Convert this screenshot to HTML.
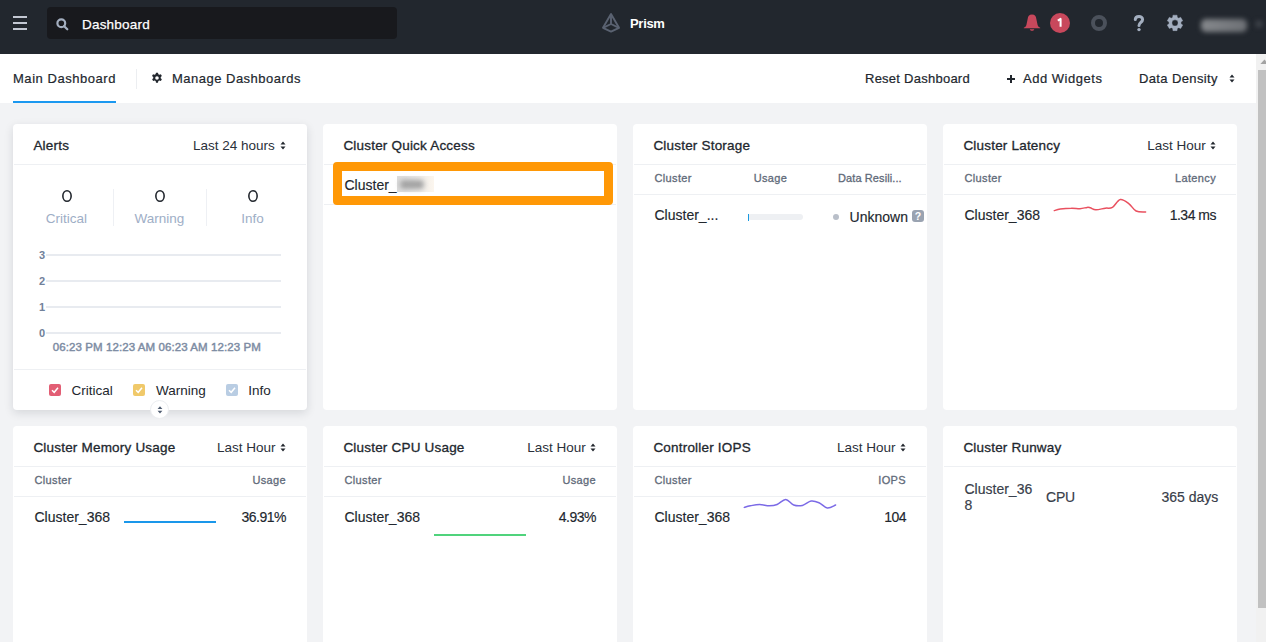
<!DOCTYPE html>
<html><head><meta charset="utf-8">
<style>
*{box-sizing:border-box;margin:0;padding:0}
html,body{width:1266px;height:642px;overflow:hidden;background:#f2f3f5;font-family:"Liberation Sans",sans-serif;color:#22272e}
.a{position:absolute}
.t{position:absolute;white-space:nowrap;line-height:1}
#hdr{left:0;top:0;width:1266px;height:54px;background:#22272e}
#tabs{left:0;top:54px;width:1256px;height:49px;background:#fff}
.card{position:absolute;background:#fff;border-radius:4px;width:294px}
.sep{position:absolute;left:1px;right:1px;height:1px;background:#eef0f3}
.ttl{font-size:13.5px;letter-spacing:0.2px;-webkit-text-stroke:0.3px #22272e;color:#22272e}
.sel{font-size:13.5px;letter-spacing:0;color:#2a303a}
.colh{font-size:11px;letter-spacing:0.35px;color:#5f6a79;-webkit-text-stroke:0.3px #5f6a79}

.val{font-size:14px;color:#22272e;-webkit-text-stroke:0.15px #22272e}
.num{letter-spacing:-0.5px}
#sb{left:1256px;top:54px;width:10px;height:588px;background:#f1f1f1}
#thumb{left:1258px;top:70px;width:8px;height:538px;background:#c1c1c1}
</style></head><body>
<!-- header -->
<div id="hdr" class="a">
  <div class="a" style="left:13px;top:16px;width:14px;height:2px;background:#c3c8d3"></div>
  <div class="a" style="left:13px;top:22px;width:14px;height:2px;background:#c3c8d3"></div>
  <div class="a" style="left:13px;top:28px;width:14px;height:2px;background:#c3c8d3"></div>
  <div class="a" style="left:47px;top:7px;width:350px;height:32px;background:#18191d;border-radius:4px"></div>
  <svg class="a" style="left:56px;top:18px" width="13" height="13" viewBox="0 0 13 13"><circle cx="5.3" cy="5.3" r="3.9" fill="none" stroke="#a3aebf" stroke-width="2.2"/><line x1="8.2" y1="8.2" x2="11.3" y2="11.3" stroke="#a3aebf" stroke-width="2.2" stroke-linecap="round"/></svg>
  <div class="t" style="left:82px;top:18.2px;font-size:13.5px;letter-spacing:0.2px;color:#fff;-webkit-text-stroke:0.25px #fff">Dashboard</div>
  <svg class="a" style="left:598px;top:10px" width="26" height="26" viewBox="598 10 26 26"><g fill="none" stroke="#5a6271" stroke-width="1.9" stroke-linejoin="round"><path d="M611 14.1 L603 27.8 L611 31.6 L619 27.8 Z"/><path d="M611 14.1 L611 24 M603 27.8 L611 24 L619 27.8"/></g></svg>
  <div class="t" style="left:630px;top:17px;font-size:13px;font-weight:700;letter-spacing:-0.3px;color:#fff">Prism</div>
  <svg class="a" style="left:1020px;top:10px" width="24" height="24" viewBox="1020 10 24 24"><path fill="#c8485c" d="M1032 14.6 C1029 14.6 1028 16.4 1027.7 18.8 L1026.4 25 C1026 26.3 1025 27.2 1023.8 27.8 L1023.8 28.3 L1040.2 28.3 L1040.2 27.8 C1039 27.2 1038 26.3 1037.6 25 L1036.3 18.8 C1036 16.4 1035 14.6 1032 14.6 Z M1029.8 29.3 L1034.3 29.3 C1033.6 31.3 1030.5 31.3 1029.8 29.3 Z"/></svg>
  <div class="a" style="left:1050px;top:13px;width:20px;height:20px;border-radius:50%;background:#c8485c"></div>
  <svg class="a" style="left:1050px;top:13px" width="20" height="20" viewBox="1050 13 20 20"><path d="M1057.8 20.6 L1060.6 18.9 L1060.6 26.8" fill="none" stroke="#fff" stroke-width="2" stroke-linejoin="round"/></svg>
  <div class="a" style="left:1091px;top:15px;width:16px;height:16px;border-radius:50%;border:4px solid #4b515b"></div>
  <svg class="a" style="left:1130px;top:12px" width="18" height="22" viewBox="1130 12 18 22"><path d="M1135.3 19.6 C1135.3 15.6 1142.6 15.4 1142.6 19.4 C1142.6 22.3 1139 22.6 1139 25.6" fill="none" stroke="#a3aebf" stroke-width="3" stroke-linecap="round"/><circle cx="1139" cy="29.6" r="1.7" fill="#a3aebf"/></svg>
  <svg class="a" style="left:1164px;top:12px" width="22" height="22" viewBox="1164 12 22 22"><path fill="#a3aebf" fill-rule="evenodd" stroke="#a3aebf" stroke-width="0.4" stroke-linejoin="round" d="M1172.75 17.34 L1172.93 15.17 L1177.07 15.17 L1177.25 17.34 L1178.69 18.17 L1180.66 17.24 L1182.73 20.83 L1180.94 22.06 L1180.94 23.74 L1182.73 24.97 L1180.66 28.56 L1178.69 27.63 L1177.25 28.46 L1177.07 30.63 L1172.93 30.63 L1172.75 28.46 L1171.31 27.63 L1169.34 28.56 L1167.27 24.97 L1169.06 23.74 L1169.06 22.06 L1167.27 20.83 L1169.34 17.24 L1171.31 18.17 Z M1178.10 22.9 A3.1 3.1 0 1 0 1171.90 22.9 A3.1 3.1 0 1 0 1178.10 22.9 Z"/></svg>
  <div class="a" style="left:1201px;top:18.5px;width:46px;height:13px;border-radius:5px;background:linear-gradient(90deg,#85888c,#6d7075);filter:blur(2.8px)"></div>
  <div class="a" style="left:1255px;top:20px;width:8px;height:8px;border-radius:50%;background:#3a3e45;filter:blur(2px)"></div>
</div>
<!-- tabs -->
<div id="tabs" class="a">
  <div class="t" style="left:13px;top:18px;font-size:13px;letter-spacing:0.54px;color:#22272e;-webkit-text-stroke:0.2px #22272e">Main Dashboard</div>
  <div class="a" style="left:13px;top:46.8px;width:103px;height:2.2px;background:#1b98f0"></div>
  <div class="a" style="left:136px;top:15px;width:1px;height:20px;background:#eceef1"></div>
  <svg class="a" style="left:151px;top:18px" width="12" height="12" viewBox="0 0 18 18"><path fill="#22272e" fill-rule="evenodd" d="M7.5 1h3l.5 2.3 1.6.9 2.2-.8 1.5 2.6-1.7 1.5v1.9l1.7 1.5-1.5 2.6-2.2-.8-1.6.9-.5 2.4h-3l-.5-2.4-1.6-.9-2.2.8-1.5-2.6 1.7-1.5V7.5L1.5 6l1.5-2.6 2.2.8 1.6-.9z M9 6.3a2.7 2.7 0 1 0 0 5.4 2.7 2.7 0 1 0 0-5.4z"/></svg>
  <div class="t" style="left:172px;top:18px;font-size:13px;letter-spacing:0.49px;color:#22272e;-webkit-text-stroke:0.2px #22272e">Manage Dashboards</div>
  <div class="t" style="left:865px;top:18px;font-size:13px;letter-spacing:0.25px;color:#22272e;-webkit-text-stroke:0.2px #22272e">Reset Dashboard</div>
  <div class="a" style="left:1007px;top:24px;width:8px;height:2px;background:#22272e"></div>
  <div class="a" style="left:1010px;top:21px;width:2px;height:8px;background:#22272e"></div>
  <div class="t" style="left:1023px;top:18px;font-size:13px;letter-spacing:0.52px;color:#22272e;-webkit-text-stroke:0.2px #22272e">Add Widgets</div>
  <div class="t" style="left:1139px;top:18px;font-size:13px;letter-spacing:0.37px;color:#22272e;-webkit-text-stroke:0.2px #22272e">Data Density</div>
  <svg class="a" style="left:1229px;top:19px" width="6" height="11" viewBox="0 0 6 11"><path d="M0.5 4.5 L3 1.5 L5.5 4.5 Z M0.5 6.5 L3 9.5 L5.5 6.5 Z" fill="#22272e"/></svg>
</div>

<!-- card 1 alerts -->
<div class="card" style="left:13px;top:124px;height:286px;box-shadow:0 3px 10px rgba(20,30,50,0.13)">
  <div class="t ttl" style="left:20.4px;top:15px">Alerts</div>
  <div class="t sel" style="left:180px;top:14.9px">Last 24 hours</div>
  <svg class="a" style="left:267px;top:16px" width="6" height="11" viewBox="0 0 6 11"><path d="M0.5 4.5 L3 1.5 L5.5 4.5 Z M0.5 6.5 L3 9.5 L5.5 6.5 Z" fill="#22272e"/></svg>
  <div class="sep" style="top:40px"></div>
  <svg class="a" style="left:48.3px;top:65px" width="12" height="14" viewBox="0 0 12 14"><ellipse cx="6" cy="7" rx="4.15" ry="5.3" fill="none" stroke="#22272e" stroke-width="1.6"/></svg>
  <svg class="a" style="left:141px;top:65px" width="12" height="14" viewBox="0 0 12 14"><ellipse cx="6" cy="7" rx="4.15" ry="5.3" fill="none" stroke="#22272e" stroke-width="1.6"/></svg>
  <svg class="a" style="left:234px;top:65px" width="12" height="14" viewBox="0 0 12 14"><ellipse cx="6" cy="7" rx="4.15" ry="5.3" fill="none" stroke="#22272e" stroke-width="1.6"/></svg>
  <div class="t" style="left:7px;top:88.1px;width:93px;text-align:center;font-size:13.5px;color:#9eaec6">Critical</div>
  <div class="t" style="left:100px;top:88.1px;width:93px;text-align:center;font-size:13.5px;color:#9eaec6">Warning</div>
  <div class="t" style="left:193px;top:88.1px;width:93px;text-align:center;font-size:13.5px;color:#9eaec6">Info</div>
  <div class="a" style="left:100px;top:65px;width:1px;height:37px;background:#eef0f4"></div>
  <div class="a" style="left:193px;top:65px;width:1px;height:37px;background:#eef0f4"></div>
  <div class="a" style="left:33px;top:130px;width:235px;height:2px;background:#e8ebf0"></div>
  <div class="a" style="left:33px;top:156px;width:235px;height:2px;background:#e8ebf0"></div>
  <div class="a" style="left:33px;top:182px;width:235px;height:2px;background:#e8ebf0"></div>
  <div class="a" style="left:33px;top:208px;width:235px;height:2px;background:#e8ebf0"></div>
  <div class="t" style="left:26px;top:126px;font-size:11px;font-weight:700;color:#71819a">3</div>
  <div class="t" style="left:26px;top:152px;font-size:11px;font-weight:700;color:#71819a">2</div>
  <div class="t" style="left:26px;top:178px;font-size:11px;font-weight:700;color:#71819a">1</div>
  <div class="t" style="left:26px;top:204px;font-size:11px;font-weight:700;color:#71819a">0</div>
  <div class="t" style="left:39.8px;top:217.8px;font-size:11.5px;font-weight:400;letter-spacing:0.08px;-webkit-text-stroke:0.45px #7d8ca3;color:#7d8ca3">06:23 PM 12:23 AM 06:23 AM 12:23 PM</div>
  <div class="sep" style="top:245px"></div>
  <div class="a" style="left:36px;top:260px;width:12px;height:12px;border-radius:2px;background:#e25e74"></div>
  <div class="a" style="left:120px;top:260px;width:12px;height:12px;border-radius:2px;background:#f0c96a"></div>
  <div class="a" style="left:213px;top:260px;width:12px;height:12px;border-radius:2px;background:#b9cde3"></div>
  <svg class="a" style="left:36px;top:260px" width="12" height="12" viewBox="0 0 12 12"><path d="M3 6.2 L5.2 8.3 L9 3.8" fill="none" stroke="#fff" stroke-width="1.5"/></svg>
  <svg class="a" style="left:120px;top:260px" width="12" height="12" viewBox="0 0 12 12"><path d="M3 6.2 L5.2 8.3 L9 3.8" fill="none" stroke="#fff" stroke-width="1.5"/></svg>
  <svg class="a" style="left:213px;top:260px" width="12" height="12" viewBox="0 0 12 12"><path d="M3 6.2 L5.2 8.3 L9 3.8" fill="none" stroke="#fff" stroke-width="1.5"/></svg>
  <div class="t" style="left:58.6px;top:260.1px;font-size:13.5px;color:#22272e">Critical</div>
  <div class="t" style="left:143px;top:260.1px;font-size:13.5px;color:#22272e">Warning</div>
  <div class="t" style="left:235.3px;top:260.1px;font-size:13.5px;color:#22272e">Info</div>
</div>
<div class="a" style="left:150.4px;top:400.1px;width:19px;height:19px;border-radius:50%;background:#fff;border:1px solid #eceef1"></div>
<svg class="a" style="left:157px;top:405px" width="6" height="10" viewBox="0 0 6 10"><path d="M0.6 4 L3 1.2 L5.4 4 Z M0.6 5.8 L3 8.6 L5.4 5.8 Z" fill="#4f5c70"/></svg>

<!-- card 2 quick access -->
<div class="card" style="left:323px;top:124px;height:286px">
  <div class="t ttl" style="left:20.4px;top:15px">Cluster Quick Access</div>
  <div class="sep" style="top:40px"></div>
  <div class="sep" style="top:80px"></div>
  <div class="a" style="left:10px;top:38px;width:280px;height:43px;border:9px solid #ff9806;border-radius:4px;background:#fff"></div>
  <div class="t val" style="left:21.5px;top:54px">Cluster_</div>
  <div class="a" style="left:74px;top:52px;width:37px;height:16px;background:linear-gradient(90deg,#dcdcdc 0%,#e6e6e6 40%,#fcf6ee 100%)"></div>
  <div class="a" style="left:77px;top:55.5px;width:24px;height:9px;border-radius:4px;background:#a3a3a3;filter:blur(2.6px)"></div>
</div>
<!-- card 3 storage -->
<div class="card" style="left:633px;top:124px;height:286px">
  <div class="t ttl" style="left:20.4px;top:15px">Cluster Storage</div>
  <div class="sep" style="top:40px"></div>
  <div class="t colh" style="left:21.5px;top:48.6px">Cluster</div>
  <div class="t colh" style="left:120.7px;top:48.6px">Usage</div>
  <div class="t colh" style="left:205px;top:48.6px;letter-spacing:0.1px">Data Resili...</div>
  <div class="sep" style="top:70px"></div>
  <div class="t val" style="left:21.5px;top:84.35px">Cluster_...</div>
  <div class="a" style="left:114.5px;top:90px;width:55px;height:6px;border-radius:3px;background:#eef0f3"></div>
  <div class="a" style="left:114.5px;top:89.5px;width:1px;height:7px;background:#1a9ae0"></div>
  <div class="a" style="left:200px;top:90px;width:6px;height:6px;border-radius:50%;background:#b9bfc9"></div>
  <div class="t val" style="left:216.6px;top:86px">Unknown</div>
  <div class="a" style="left:279px;top:86px;width:12px;height:12px;border-radius:3px;background:#9aa3b1"></div>
  <div class="t" style="left:279px;top:87px;width:12px;text-align:center;font-size:10.5px;font-weight:700;color:#fff">?</div>
</div>
<!-- card 4 latency -->
<div class="card" style="left:943px;top:124px;height:286px">
  <div class="t ttl" style="left:20.4px;top:15px">Cluster Latency</div>
  <div class="t sel" style="left:204.3px;top:14.9px">Last Hour</div>
  <svg class="a" style="left:267px;top:16px" width="6" height="11" viewBox="0 0 6 11"><path d="M0.5 4.5 L3 1.5 L5.5 4.5 Z M0.5 6.5 L3 9.5 L5.5 6.5 Z" fill="#22272e"/></svg>
  <div class="sep" style="top:40px"></div>
  <div class="t colh" style="left:21.5px;top:48.6px">Cluster</div>
  <div class="t colh" style="right:21px;top:48.6px">Latency</div>
  <div class="sep" style="top:70px"></div>
  <div class="t val" style="left:21.5px;top:84.35px">Cluster_368</div>
  <svg class="a" style="left:0;top:0" width="294" height="120" viewBox="943 124 294 120"><path fill="none" stroke="#e9505f" stroke-width="1.5" stroke-linecap="round" d="M1054.3,210.6 C1055.3,210.3 1057.5,209.4 1060.3,209 C1063.1,208.6 1068.0,208.2 1071.3,208.2 C1074.6,208.1 1077.4,208.8 1080,208.7 C1082.6,208.6 1085.4,207.6 1087.1,207.4 C1088.8,207.2 1088.8,207.4 1090.3,207.8 C1091.8,208.2 1093.3,209.7 1095.8,209.8 C1098.3,209.9 1102.5,208.6 1105.3,208.2 C1108.1,207.8 1109.9,208.8 1112.4,207.4 C1114.9,206.0 1117.5,200.1 1120.3,199.5 C1123.1,198.9 1126.4,201.9 1129,203.8 C1131.6,205.7 1133.3,209.7 1136.1,211 C1138.9,212.3 1144.0,211.8 1145.6,211.9"/></svg>
  <div class="t val num" style="right:21px;top:84.35px">1.34 ms</div>
</div>
<!-- card 5 memory -->
<div class="card" style="left:13px;top:426px;height:240px">
  <div class="t ttl" style="left:20.4px;top:15px">Cluster Memory Usage</div>
  <div class="t sel" style="left:203.9px;top:14.9px">Last Hour</div>
  <svg class="a" style="left:267px;top:16px" width="6" height="11" viewBox="0 0 6 11"><path d="M0.5 4.5 L3 1.5 L5.5 4.5 Z M0.5 6.5 L3 9.5 L5.5 6.5 Z" fill="#22272e"/></svg>
  <div class="sep" style="top:40px"></div>
  <div class="t colh" style="left:21.5px;top:48.6px">Cluster</div>
  <div class="t colh" style="right:21px;top:48.6px">Usage</div>
  <div class="sep" style="top:70px"></div>
  <div class="t val" style="left:21.5px;top:84.35px">Cluster_368</div>
  <div class="a" style="left:111px;top:95px;width:92px;height:2px;background:#1a97ea"></div>
  <div class="t val num" style="right:21px;top:84.35px">36.91%</div>
</div>
<!-- card 6 cpu -->
<div class="card" style="left:323px;top:426px;height:240px">
  <div class="t ttl" style="left:20.4px;top:15px">Cluster CPU Usage</div>
  <div class="t sel" style="left:204.2px;top:14.9px">Last Hour</div>
  <svg class="a" style="left:267px;top:16px" width="6" height="11" viewBox="0 0 6 11"><path d="M0.5 4.5 L3 1.5 L5.5 4.5 Z M0.5 6.5 L3 9.5 L5.5 6.5 Z" fill="#22272e"/></svg>
  <div class="sep" style="top:40px"></div>
  <div class="t colh" style="left:21.5px;top:48.6px">Cluster</div>
  <div class="t colh" style="right:21px;top:48.6px">Usage</div>
  <div class="sep" style="top:70px"></div>
  <div class="t val" style="left:21.5px;top:84.35px">Cluster_368</div>
  <div class="a" style="left:111px;top:108px;width:92px;height:2px;background:#50d37c"></div>
  <div class="t val num" style="right:21px;top:84.35px">4.93%</div>
</div>
<!-- card 7 iops -->
<div class="card" style="left:633px;top:426px;height:240px">
  <div class="t ttl" style="left:20.4px;top:15px">Controller IOPS</div>
  <div class="t sel" style="left:203.9px;top:14.9px">Last Hour</div>
  <svg class="a" style="left:267px;top:16px" width="6" height="11" viewBox="0 0 6 11"><path d="M0.5 4.5 L3 1.5 L5.5 4.5 Z M0.5 6.5 L3 9.5 L5.5 6.5 Z" fill="#22272e"/></svg>
  <div class="sep" style="top:40px"></div>
  <div class="t colh" style="left:21.5px;top:48.6px">Cluster</div>
  <div class="t colh" style="right:21px;top:48.6px">IOPS</div>
  <div class="sep" style="top:70px"></div>
  <div class="t val" style="left:21.5px;top:84.35px">Cluster_368</div>
  <svg class="a" style="left:0;top:0" width="294" height="120" viewBox="633 426 294 120"><path fill="none" stroke="#7b6ae6" stroke-width="1.5" stroke-linecap="round" d="M744.3,507.4 C745.3,507.1 747.7,506.3 750.3,505.8 C752.9,505.3 756.6,504.5 759.7,504.5 C762.9,504.5 766.3,505.8 769.2,505.8 C772.1,505.8 774.4,505.6 777.1,504.5 C779.9,503.4 782.9,499.4 785.7,499.5 C788.5,499.6 790.9,504.0 793.7,505 C796.5,506.0 799.5,506.0 802.4,505.4 C805.3,504.8 808.3,501.6 811.1,501.1 C813.9,500.7 816.3,501.6 819,502.7 C821.7,503.8 824.5,507.6 827.3,508 C830.1,508.4 834.2,505.5 835.6,505"/></svg>
  <div class="t val num" style="right:21px;top:84.35px">104</div>
</div>
<!-- card 8 runway -->
<div class="card" style="left:943px;top:426px;height:240px">
  <div class="t ttl" style="left:20.4px;top:15px">Cluster Runway</div>
  <div class="sep" style="top:40px"></div>
  <div class="t val" style="left:21.5px;top:55.9px;letter-spacing:0;color:#3a414d">Cluster_36</div>
  <div class="t val" style="left:21.5px;top:72.4px;color:#3a414d">8</div>
  <div class="t val" style="left:103px;top:64.4px;letter-spacing:-0.2px;color:#3a414d">CPU</div>
  <div class="t val" style="left:218.5px;top:64.4px;letter-spacing:0;color:#3a414d">365 days</div>
</div>
<div id="sb" class="a"></div>
<div id="thumb" class="a"></div>
<svg class="a" style="left:1256px;top:54px" width="10" height="16" viewBox="1256 54 10 16"><path d="M1264.5 59.6 L1268.6 63.9 L1260.4 63.9 Z" fill="#a3a3a3"/></svg>
</body></html>
